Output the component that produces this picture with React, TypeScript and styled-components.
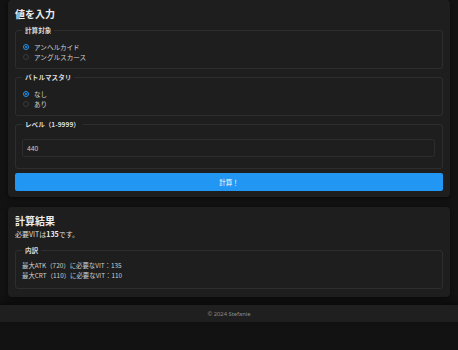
import React from "react";
import styled, { createGlobalStyle } from "styled-components";

const Global = createGlobalStyle`
  html, body { margin: 0; padding: 0; background: #121212; }
  body { font-family: "Noto Sans CJK JP", "Noto Sans", sans-serif; color: #e2e2e2; }
  * { box-sizing: border-box; }
`;

const Page = styled.div`
  display: flex;
  flex-direction: column;
  min-height: 350px;
`;

const Main = styled.main`
  display: flex;
  flex-direction: column;
  gap: 10px;
  padding: 0 8px;
`;

const Card = styled.section<{ $pb?: number }>`
  background: #1e1e1e;
  border-radius: 4px;
  padding: 8px 7px ${(p) => p.$pb ?? 6}px;
  box-shadow: 0 1px 4px rgba(0, 0, 0, 0.5);
  display: flex;
  flex-direction: column;
`;

const Title = styled.h2`
  margin: 0;
  font-size: 10px;
  line-height: 12px;
  font-weight: 700;
  color: #ececec;
`;

const Field = styled.fieldset<{ $mt?: number }>`
  margin: ${(p) => p.$mt ?? 4}px 0 0;
  padding: 0 6px 6px;
  border: 1px solid #2e2e2e;
  border-radius: 3px;
  min-width: 0;
`;

const Legend = styled.legend`
  padding: 0 3px;
  margin-left: 0;
  font-size: 6.6px;
  line-height: 8px;
  font-weight: 700;
  color: #dcdcdc;
`;

const Options = styled.div`
  display: flex;
  flex-direction: column;
  padding-top: 8px;
`;

const Option = styled.label`
  display: flex;
  align-items: center;
  gap: 5px;
  height: 10px;
  font-size: 6.6px;
  color: #cfcfcf;
`;

const Radio = styled.span<{ $on?: boolean }>`
  width: 6px;
  height: 6px;
  border-radius: 50%;
  margin-left: 1px;
  border: 1px solid ${(p) => (p.$on ? "#2196f3" : "#3a3a3a")};
  display: flex;
  align-items: center;
  justify-content: center;
  &::after {
    content: "";
    width: 2px;
    height: 2px;
    border-radius: 50%;
    background: ${(p) => (p.$on ? "#2196f3" : "transparent")};
  }
`;

const InputWrap = styled.div`
  padding: 11px 1px 5px 0;
`;

const Input = styled.input`
  display: block;
  width: 100%;
  height: 18px;
  background: #1e1e1e;
  border: 1px solid #2c2c2c;
  border-radius: 2px;
  color: #cfcfcf;
  font-family: "Noto Sans", sans-serif;
  font-size: 6.5px;
  padding: 0 4px;
  outline: none;
`;

const Button = styled.button`
  margin-top: 4px;
  height: 18px;
  border: none;
  border-radius: 2px;
  background: #2196f3;
  color: #ffffff;
  font-family: "Noto Sans CJK JP", sans-serif;
  font-size: 6.5px;
  cursor: pointer;
`;

const Summary = styled.p`
  margin: 1px 0 0;
  font-size: 7px;
  line-height: 12px;
  color: #dcdcdc;
  b { font-weight: 700; color: #f0f0f0; }
`;

const Lines = styled.div`
  padding: 7px 0 1px;
  display: flex;
  flex-direction: column;
`;

const Line = styled.div`
  font-size: 6.4px;
  line-height: 10px;
  color: #cfcfcf;
`;

const Footer = styled.footer`
  margin-top: 8px;
  height: 17px;
  background: #1f1f1f;
  box-shadow: 0 -3px 6px rgba(0, 0, 0, 0.45);
  display: flex;
  align-items: center;
  justify-content: center;
  font-family: "Noto Sans", sans-serif;
  font-size: 5.8px;
  color: #8c8c8c;
`;

export default function App() {
  return (
    <Page>
      <Global />
      <Main>
        <Card>
          <Title>値を入力</Title>
          <Field $mt={6}>
            <Legend>計算対象</Legend>
            <Options>
              <Option><Radio $on />アンヘルカイド</Option>
              <Option><Radio />アングルスカース</Option>
            </Options>
          </Field>
          <Field>
            <Legend>バトルマスタリ</Legend>
            <Options>
              <Option><Radio $on />なし</Option>
              <Option><Radio />あり</Option>
            </Options>
          </Field>
          <Field>
            <Legend>レベル（1-9999）</Legend>
            <InputWrap>
              <Input defaultValue="440" />
            </InputWrap>
          </Field>
          <Button>計算！</Button>
        </Card>
        <Card $pb={8}>
          <Title>計算結果</Title>
          <Summary>必要VITは<b>135</b>です。</Summary>
          <Field $mt={6}>
            <Legend>内訳</Legend>
            <Lines>
              <Line>最大ATK（720）に必要なVIT：135</Line>
              <Line>最大CRT（110）に必要なVIT：110</Line>
            </Lines>
          </Field>
        </Card>
      </Main>
      <Footer>© 2024 Stefanie</Footer>
    </Page>
  );
}
